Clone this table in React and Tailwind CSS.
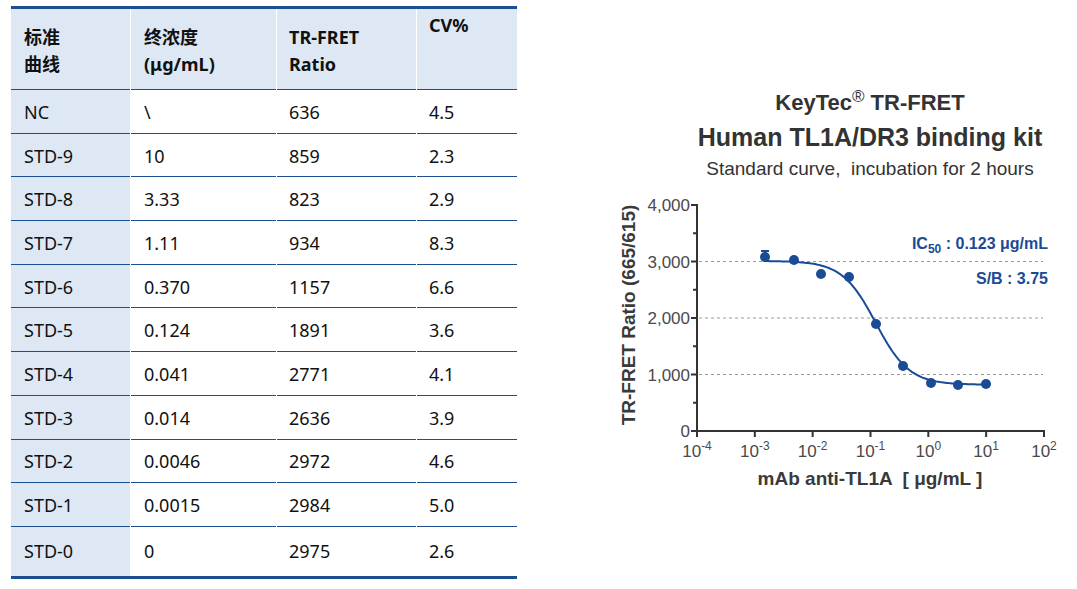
import React from "react";

const rows = [
  ["NC", "\\", "636", "4.5"],
  ["STD-9", "10", "859", "2.3"],
  ["STD-8", "3.33", "823", "2.9"],
  ["STD-7", "1.11", "934", "8.3"],
  ["STD-6", "0.370", "1157", "6.6"],
  ["STD-5", "0.124", "1891", "3.6"],
  ["STD-4", "0.041", "2771", "4.1"],
  ["STD-3", "0.014", "2636", "3.9"],
  ["STD-2", "0.0046", "2972", "4.6"],
  ["STD-1", "0.0015", "2984", "5.0"],
  ["STD-0", "0", "2975", "2.6"],
];

const BLUE = "#1a4b95";

// chart helpers, page pixel space
const xOf = (logc) => 697 + (logc + 4) * 57.83;
const yOf = (v) => 431 - v * 0.0565;

const curvePath = (() => {
  const pts = [];
  for (let l = -2.83; l <= 1.0001; l += 0.03) {
    const c = Math.pow(10, l);
    const v = 820 + 2190 / (1 + Math.pow(c / 0.123, 1.5));
    pts.push(`${xOf(l).toFixed(1)},${yOf(v).toFixed(1)}`);
  }
  return "M" + pts.join(" L");
})();

const points = [
  [765, 257],
  [794, 260],
  [821, 274],
  [849, 277],
  [876, 324],
  [903, 366],
  [931, 383],
  [958, 385],
  [986, 384],
];

const Chart = () => (
  <svg
    width="477"
    height="305"
    viewBox="600 190 477 305"
    style={{ fontFamily: '"Liberation Sans", Arial, sans-serif' }}
  >
    {/* gridlines */}
    {[1000, 2000, 3000].map((v) => (
      <line
        key={v}
        x1="699"
        x2="1043"
        y1={yOf(v)}
        y2={yOf(v)}
        stroke="#9a9a9a"
        strokeWidth="1"
        strokeDasharray="3 3"
      />
    ))}

    {/* y axis */}
    <line x1="697" x2="697" y1="204" y2="432" stroke="#333" strokeWidth="2" />
    {[0, 1000, 2000, 3000, 4000].map((v) => (
      <g key={v}>
        <line x1="691" x2="697" y1={yOf(v)} y2={yOf(v)} stroke="#333" strokeWidth="2" />
        <text x="690" y={yOf(v) + 6} textAnchor="end" fontSize="17" fill="#4a4a4a">
          {v === 0 ? "0" : v.toLocaleString("en-US")}
        </text>
      </g>
    ))}
    {[500, 1500, 2500, 3500].map((v) => (
      <line key={v} x1="693" x2="697" y1={yOf(v)} y2={yOf(v)} stroke="#333" strokeWidth="2" />
    ))}

    {/* x axis */}
    <line x1="696" x2="1045" y1="431" y2="431" stroke="#333" strokeWidth="2" />
    {[-4, -3, -2, -1, 0, 1, 2].map((e) => (
      <g key={e}>
        <line x1={xOf(e)} x2={xOf(e)} y1="431" y2="437" stroke="#333" strokeWidth="2" />
        <text x={xOf(e)} y="457" textAnchor="middle" fontSize="17" fill="#4a4a4a">
          10
          <tspan dy="-7" fontSize="12">
            {e}
          </tspan>
        </text>
      </g>
    ))}

    {/* curve */}
    <path d={curvePath} fill="none" stroke={BLUE} strokeWidth="2" />
    {/* error bar on first point */}
    <line x1="765" x2="765" y1="251" y2="262" stroke={BLUE} strokeWidth="2" />
    <line x1="761" x2="769" y1="251" y2="251" stroke={BLUE} strokeWidth="2" />
    {points.map(([x, y], i) => (
      <circle key={i} cx={x} cy={y} r="5" fill={BLUE} />
    ))}

    {/* annotations */}
    <text x="1048" y="249" textAnchor="end" fontSize="16" fontWeight="700" fill={BLUE}>
      IC
      <tspan fontSize="12" dy="4">50</tspan>
      <tspan dy="-4"> : 0.123 μg/mL</tspan>
    </text>
    <text x="1048" y="284" textAnchor="end" fontSize="16" fontWeight="700" fill={BLUE}>
      S/B : 3.75
    </text>

    {/* axis titles */}
    <text
      x="628"
      y="315"
      transform="rotate(-90 628 315)"
      textAnchor="middle"
      dominantBaseline="central"
      fontSize="19"
      fontWeight="700"
      fill="#3a3a3a"
    >
      TR-FRET Ratio (665/615)
    </text>
    <text x="870" y="485" textAnchor="middle" fontSize="19" fontWeight="700" fill="#3a3a3a" xmlSpace="preserve">
      mAb anti-TL1A  [ μg/mL ]
    </text>
  </svg>
);

export default function App() {
  return (
    <div className="w-[1077px] h-[589px] bg-white flex overflow-hidden">
      {/* Table */}
      <div
        className="ml-[11px] mt-[6px] w-[506px] self-start border-t-[3px] border-b-[3px] border-[#1b4f8f] text-[18px] text-[#111]"
        style={{ fontFamily: '"Noto Sans", "Noto Sans CJK SC", sans-serif' }}
      >
        <div className="grid grid-cols-[119px_145px_139px_100px] gap-x-px">
          {/* header */}
          <div className="h-[81px] bg-[#dde8f4] border-b border-[#1b4f8f] flex items-center pt-[3px] pl-[13px] font-bold leading-[27px]">
            <div>
              标准
              <br />
              曲线
            </div>
          </div>
          <div className="h-[81px] bg-[#dde8f4] border-b border-[#1b4f8f] flex items-center pt-[3px] pl-[13px] font-bold leading-[27px]">
            <div>
              终浓度
              <br />
              (μg/mL)
            </div>
          </div>
          <div className="h-[81px] bg-[#dde8f4] border-b border-[#1b4f8f] flex items-center pt-[3px] pl-[12px] font-bold leading-[27px]">
            <div>
              TR-FRET
              <br />
              Ratio
            </div>
          </div>
          <div className="h-[81px] bg-[#dde8f4] border-b border-[#1b4f8f] pt-[3px] pl-[12px] font-bold leading-[27px]">
            CV%
          </div>

          {/* body */}
          {rows.map((r, i) => {
            const last = i === rows.length - 1;
            const cls = last ? "h-[49px]" : "h-[43.7px] pt-[2px] border-b border-[#1b4f8f]";
            return (
              <React.Fragment key={r[0]}>
                <div className={`${cls} bg-[#dde8f4] flex items-center pl-[13px]`}>{r[0]}</div>
                <div className={`${cls} flex items-center pl-[13px]`}>{r[1]}</div>
                <div className={`${cls} flex items-center pl-[12px]`}>{r[2]}</div>
                <div className={`${cls} flex items-center pl-[12px]`}>{r[3]}</div>
              </React.Fragment>
            );
          })}
        </div>
      </div>

      {/* Chart panel */}
      <div
        className="ml-[83px] w-[477px] flex flex-col text-[#333]"
        style={{ fontFamily: '"Liberation Sans", Arial, sans-serif' }}
      >
        <div className="ml-[60px] w-[420px] mt-[88px] text-center">
          <div className="text-[22px] font-bold leading-[30px]">
            KeyTec
            <span className="text-[17px] font-normal relative -top-[8px] leading-none">®</span> TR-FRET
          </div>
          <div className="text-[25px] font-bold leading-[38px]">Human TL1A/DR3 binding kit</div>
          <div className="text-[19px] leading-[26px] whitespace-pre">Standard curve,  incubation for 2 hours</div>
        </div>
        <div className="mt-[8px]">
          <Chart />
        </div>
      </div>
    </div>
  );
}
